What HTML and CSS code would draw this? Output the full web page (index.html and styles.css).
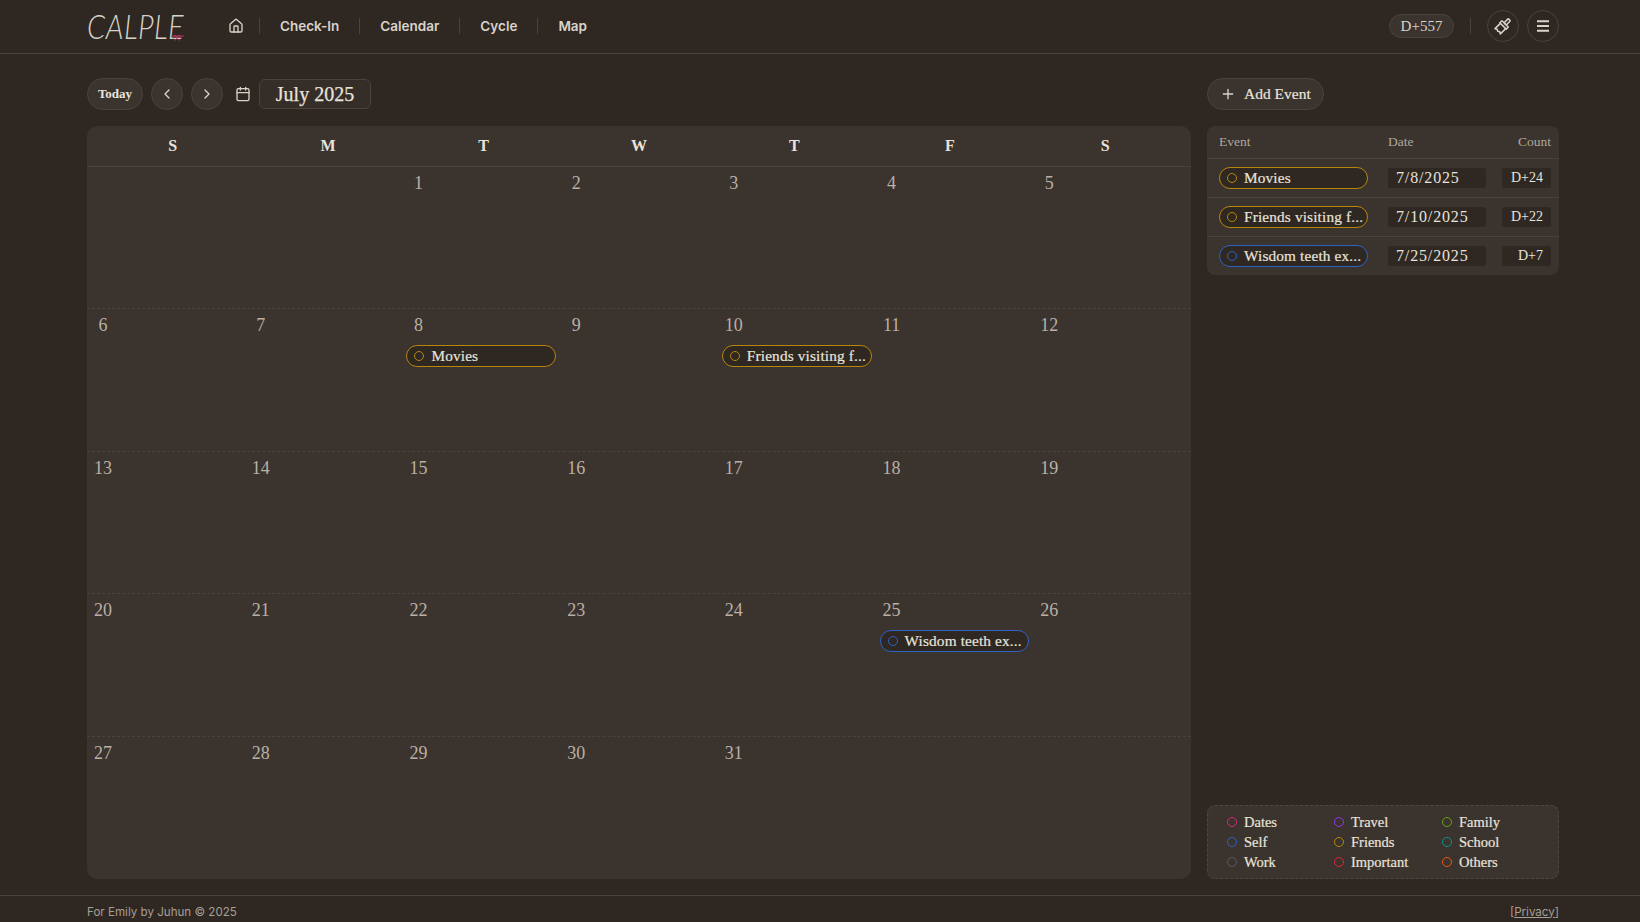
FILE: index.html
```html
<!DOCTYPE html>
<html lang="en">
<head>
    <meta charset="UTF-8">
    <title>Calple</title>
    <link rel="stylesheet" href="styles.css">
</head>
<body>
<header class="topbar">
    <div class="logo">
        <span class="logo-text">CALPLE</span>
        <svg class="logo-loops" width="14" height="8" viewBox="0 0 14 8" fill="none" stroke="#d0366f" stroke-width="0.8">
            <path d="M0 2h13"/>
            <path d="M4 1c-2 1-2 5 0 5s2-4 0-5z"/>
            <path d="M8 1c-2 1-2 5 0 5s2-4 0-5z"/>
        </svg>
    </div>
    <nav class="nav">
        <a class="nav-home" href="#">
            <svg width="16" height="16" viewBox="0 0 24 24" fill="none" stroke="currentColor" stroke-width="2" stroke-linecap="round" stroke-linejoin="round">
                <path d="M15 21v-8a1 1 0 0 0-1-1h-4a1 1 0 0 0-1 1v8"/>
                <path d="M3 10a2 2 0 0 1 .709-1.528l7-5.999a2 2 0 0 1 2.582 0l7 5.999A2 2 0 0 1 21 10v9a2 2 0 0 1-2 2H5a2 2 0 0 1-2-2z"/>
            </svg>
        </a>
        <a class="nav-link" href="#">Check-In</a>
        <a class="nav-link" href="#">Calendar</a>
        <a class="nav-link" href="#">Cycle</a>
        <a class="nav-link" href="#">Map</a>
    </nav>
    <div class="topbar-right">
        <span class="dday">D+557</span>
        <span class="vline"></span>
        <button class="round-btn outline">
            <svg width="18" height="18" viewBox="0 0 24 24" fill="none" stroke="currentColor" stroke-width="2" stroke-linejoin="round">
                <g transform="rotate(45 12 12)">
                    <rect x="10" y="0" width="4" height="8" rx="1"/>
                    <rect x="6" y="8" width="12" height="4"/>
                    <path d="M7 12v10l2.500-1.500L12 22l2.500-1.500L17 22V12"/>
                </g>
            </svg>
        </button>
        <button class="round-btn outline">
            <svg width="16" height="16" viewBox="0 0 24 24" fill="none" stroke="currentColor" stroke-width="3">
                <path d="M3 5h18M3 12h18M3 19h18"/>
            </svg>
        </button>
    </div>
</header>

<main class="page">
    <section class="left">
        <div class="toolbar">
            <button class="today-btn">Today</button>
            <button class="round-btn">
                <svg width="16" height="16" viewBox="0 0 24 24" fill="none" stroke="currentColor" stroke-width="2" stroke-linecap="round" stroke-linejoin="round"><path d="m15 18-6-6 6-6"/></svg>
            </button>
            <button class="round-btn">
                <svg width="16" height="16" viewBox="0 0 24 24" fill="none" stroke="currentColor" stroke-width="2" stroke-linecap="round" stroke-linejoin="round"><path d="m9 18 6-6-6-6"/></svg>
            </button>
            <svg class="cal-icon" width="16" height="16" viewBox="0 0 24 24" fill="none" stroke="currentColor" stroke-width="2" stroke-linecap="round" stroke-linejoin="round">
                <path d="M8 2v4M16 2v4"/>
                <rect x="3" y="4" width="18" height="18" rx="2"/>
                <path d="M3 10h18"/>
            </svg>
            <div class="month-title">July 2025</div>
        </div>

        <div class="calendar">
            <div class="week-head">
                <div>S</div><div>M</div><div>T</div><div>W</div><div>T</div><div>F</div><div>S</div>
            </div>
            <div class="weeks">
                <div class="week">
                    <div class="day"></div>
                    <div class="day"></div>
                    <div class="day"><span class="num">1</span></div>
                    <div class="day"><span class="num">2</span></div>
                    <div class="day"><span class="num">3</span></div>
                    <div class="day"><span class="num">4</span></div>
                    <div class="day"><span class="num">5</span></div>
                </div>
                <div class="week">
                    <div class="day"><span class="num">6</span></div>
                    <div class="day"><span class="num">7</span></div>
                    <div class="day"><span class="num">8</span>
                        <div class="pill friends"><i class="ring"></i><span>Movies</span></div>
                    </div>
                    <div class="day"><span class="num">9</span></div>
                    <div class="day"><span class="num">10</span>
                        <div class="pill friends"><i class="ring"></i><span>Friends visiting f...</span></div>
                    </div>
                    <div class="day"><span class="num">11</span></div>
                    <div class="day"><span class="num">12</span></div>
                </div>
                <div class="week">
                    <div class="day"><span class="num">13</span></div>
                    <div class="day"><span class="num">14</span></div>
                    <div class="day"><span class="num">15</span></div>
                    <div class="day"><span class="num">16</span></div>
                    <div class="day"><span class="num">17</span></div>
                    <div class="day"><span class="num">18</span></div>
                    <div class="day"><span class="num">19</span></div>
                </div>
                <div class="week">
                    <div class="day"><span class="num">20</span></div>
                    <div class="day"><span class="num">21</span></div>
                    <div class="day"><span class="num">22</span></div>
                    <div class="day"><span class="num">23</span></div>
                    <div class="day"><span class="num">24</span></div>
                    <div class="day"><span class="num">25</span>
                        <div class="pill self"><i class="ring"></i><span>Wisdom teeth ex...</span></div>
                    </div>
                    <div class="day"><span class="num">26</span></div>
                </div>
                <div class="week">
                    <div class="day"><span class="num">27</span></div>
                    <div class="day"><span class="num">28</span></div>
                    <div class="day"><span class="num">29</span></div>
                    <div class="day"><span class="num">30</span></div>
                    <div class="day"><span class="num">31</span></div>
                    <div class="day"></div>
                    <div class="day"></div>
                </div>
            </div>
        </div>
    </section>

    <aside class="side">
        <div class="side-top">
            <button class="add-btn">
                <svg width="16" height="16" viewBox="0 0 24 24" fill="none" stroke="currentColor" stroke-width="2" stroke-linecap="round"><path d="M5 12h14M12 5v14"/></svg>
                <span>Add Event</span>
            </button>
        </div>
        <div class="events">
            <div class="ev-row ev-head">
                <div>Event</div><div>Date</div><div class="ev-count">Count</div>
            </div>
            <div class="ev-row">
                <div class="pill friends"><i class="ring"></i><span>Movies</span></div>
                <div class="ev-date">7/8/2025</div>
                <div class="ev-dday">D+24</div>
            </div>
            <div class="ev-row">
                <div class="pill friends"><i class="ring"></i><span>Friends visiting f...</span></div>
                <div class="ev-date">7/10/2025</div>
                <div class="ev-dday">D+22</div>
            </div>
            <div class="ev-row">
                <div class="pill self"><i class="ring"></i><span>Wisdom teeth ex...</span></div>
                <div class="ev-date">7/25/2025</div>
                <div class="ev-dday">D+7</div>
            </div>
        </div>
        <div class="legend">
            <div class="legend-item dates"><i class="ring"></i>Dates</div>
            <div class="legend-item travel"><i class="ring"></i>Travel</div>
            <div class="legend-item family"><i class="ring"></i>Family</div>
            <div class="legend-item self"><i class="ring"></i>Self</div>
            <div class="legend-item friends"><i class="ring"></i>Friends</div>
            <div class="legend-item school"><i class="ring"></i>School</div>
            <div class="legend-item work"><i class="ring"></i>Work</div>
            <div class="legend-item important"><i class="ring"></i>Important</div>
            <div class="legend-item others"><i class="ring"></i>Others</div>
        </div>
    </aside>
</main>

<footer class="footer">
    <span>For Emily by Juhun © 2025</span>
    <span>[<a href="#">Privacy</a>]</span>
</footer>
</body>
</html>
```

FILE: styles.css
```css
* {
    box-sizing: border-box;
}

html, body {
    height: 100%;
    margin: 0;
}

body {
    display: flex;
    flex-direction: column;
    overflow: hidden;
    background-color: #2e2722;
    color: #e8e3db;
    font-family: "Liberation Serif", serif;
}

a {
    color: inherit;
    text-decoration: none;
}

button {
    font-family: inherit;
    color: inherit;
    cursor: pointer;
}

/* top bar */
.topbar {
    display: flex;
    align-items: center;
    height: 54px;
    flex-shrink: 0;
    padding: 0 81px 2px 87px;
    border-bottom: 1px solid #4a423b;
}

.logo {
    position: relative;
    width: 141px;
    flex-shrink: 0;
}

.logo-text {
    display: inline-block;
    font-family: Lato, sans-serif;
    font-weight: 300;
    font-style: italic;
    font-size: 29px;
    letter-spacing: 0.5px;
    color: #d8d2c9;
    transform: scaleY(1.15);
}

.logo-loops {
    position: absolute;
    left: 84px;
    top: 26px;
}

.nav {
    display: flex;
    align-items: center;
    font-family: Inter, sans-serif;
    font-weight: 600;
    font-size: 13.500px;
    color: #d9d3ca;
}

.nav-home {
    display: flex;
    padding-right: 15px;
}

.nav-link {
    display: block;
    height: 16px;
    line-height: 16px;
    padding: 0 20px;
    border-left: 1px solid #4a423b;
}

.topbar-right {
    display: flex;
    align-items: center;
    margin-left: auto;
}

.dday {
    width: 65px;
    height: 24px;
    line-height: 22px;
    text-align: center;
    font-size: 15px;
    color: #d9d3ca;
    background-color: #3b332e;
    border: 1px solid #4a423b;
    border-radius: 12px;
}

.vline {
    width: 1px;
    height: 16px;
    margin: 0 16px;
    background-color: #4a423b;
}

.round-btn {
    display: flex;
    align-items: center;
    justify-content: center;
    width: 32px;
    height: 32px;
    padding: 0;
    color: #d9d3ca;
    background-color: #3b332e;
    border: 1px solid #4a423b;
    border-radius: 50%;
}

.round-btn.outline {
    background-color: transparent;
}

.round-btn.outline + .round-btn.outline {
    margin-left: 8px;
}

/* main layout */
.page {
    flex: 1;
    display: flex;
    gap: 16px;
    min-height: 0;
    padding: 24px 81px 16px 87px;
}

.left {
    display: flex;
    flex-direction: column;
    width: 1104px;
}

.toolbar {
    display: flex;
    align-items: center;
    gap: 8px;
    height: 32px;
    margin-bottom: 16px;
}

.today-btn {
    width: 56px;
    height: 32px;
    padding: 0;
    font-size: 13px;
    font-weight: 700;
    background-color: #3b332e;
    border: 1px solid #4a423b;
    border-radius: 16px;
}

.cal-icon {
    margin-left: 4px;
    color: #d9d3ca;
}

.month-title {
    width: 112px;
    height: 30px;
    line-height: 28px;
    text-align: center;
    font-size: 20px;
    -webkit-text-stroke: 0.25px;
    background-color: #352d28;
    border: 1px solid #4a423b;
    border-radius: 6px;
}

/* calendar */
.calendar {
    flex: 1;
    display: flex;
    flex-direction: column;
    min-height: 0;
    background-color: #3b332e;
    border-radius: 10px;
}

.week-head {
    display: grid;
    grid-template-columns: repeat(7, 1fr);
    height: 41px;
    padding: 0 8px;
    line-height: 40px;
    text-align: center;
    font-size: 16px;
    font-weight: 700;
    border-bottom: 1px solid #4a423b;
}

.weeks {
    flex: 1;
    display: grid;
    grid-template-rows: repeat(5, 1fr);
}

.week {
    display: grid;
    grid-template-columns: repeat(7, 1fr);
    border-bottom: 1px dashed #4a423b;
}

.week:last-child {
    border-bottom: none;
}

.num {
    display: block;
    width: 32px;
    height: 32px;
    line-height: 33px;
    text-align: center;
    font-size: 18px;
    color: #b9b0a6;
}

.day .pill {
    margin: 4px 4px 0;
}

/* event pills */
.pill {
    display: flex;
    align-items: center;
    gap: 7px;
    height: 22px;
    padding: 0 3px 0 7px;
    font-size: 15.300px;
    letter-spacing: 0.15px;
    -webkit-text-stroke: 0.2px;
    white-space: nowrap;
    overflow: hidden;
    background-color: #2e2722;
    border: 1.5px solid;
    border-radius: 11px;
}

.ring {
    display: block;
    width: 10px;
    height: 10px;
    flex-shrink: 0;
    border: 1.5px solid;
    border-radius: 50%;
}

.pill.friends, .legend-item.friends .ring, .pill.friends .ring {
    border-color: #b8860b;
}

.pill.self, .legend-item.self .ring, .pill.self .ring {
    border-color: #2f62c4;
}

/* right column */
.side {
    display: flex;
    flex-direction: column;
    width: 352px;
}

.side-top {
    height: 32px;
    margin-bottom: 16px;
}

.add-btn {
    display: flex;
    align-items: center;
    gap: 8px;
    width: 117px;
    height: 32px;
    padding: 0 0 0 12px;
    font-size: 15.500px;
    -webkit-text-stroke: 0.2px;
    background-color: #3b332e;
    border: 1px solid #4a423b;
    border-radius: 16px;
}

.add-btn svg {
    color: #d9d3ca;
}

.events {
    background-color: #3b332e;
    border-radius: 8px;
}

.ev-row {
    display: grid;
    grid-template-columns: 169px 114px 49px;
    align-items: center;
    height: 39px;
    padding: 0 8px 0 12px;
    border-top: 1px solid #4a423b;
}

.ev-row .pill {
    width: 149px;
}

.ev-head {
    height: 32px;
    padding-bottom: 1px;
    font-size: 13.500px;
    color: #b0a79c;
    border-top: none;
}

.ev-count {
    text-align: right;
}

.ev-date, .ev-dday {
    height: 20px;
    line-height: 20px;
    background-color: #2e2722;
    border-radius: 3px;
}

.ev-date {
    width: 98px;
    padding-left: 8px;
    font-size: 16px;
    letter-spacing: 0.85px;
}

.ev-dday {
    padding-right: 8px;
    text-align: right;
    font-size: 14px;
}

/* legend */
.legend {
    display: grid;
    grid-template-columns: 107px 108px 108px;
    grid-auto-rows: 20px;
    align-items: center;
    margin-top: auto;
    padding: 6px 0 6px 19px;
    height: 74px;
    font-size: 14.500px;
    -webkit-text-stroke: 0.2px;
    background-color: #3b332e;
    border: 1px dashed #4e4640;
    border-radius: 8px;
}

.legend-item {
    display: flex;
    align-items: center;
    gap: 7px;
}

.dates .ring { border-color: #db2777; }
.travel .ring { border-color: #9333ea; }
.family .ring { border-color: #65a30d; }
.school .ring { border-color: #0d9488; }
.work .ring { border-color: #5c5a5e; }
.important .ring { border-color: #dc2640; }
.others .ring { border-color: #ea580c; }

/* footer */
.footer {
    display: flex;
    align-items: center;
    justify-content: space-between;
    flex-shrink: 0;
    height: 27px;
    padding: 5px 81px 0 87px;
    font-family: Inter, sans-serif;
    font-size: 11.600px;
    color: #a89f94;
    border-top: 1px solid #4a423b;
}

.footer a {
    text-decoration: underline;
}
```
